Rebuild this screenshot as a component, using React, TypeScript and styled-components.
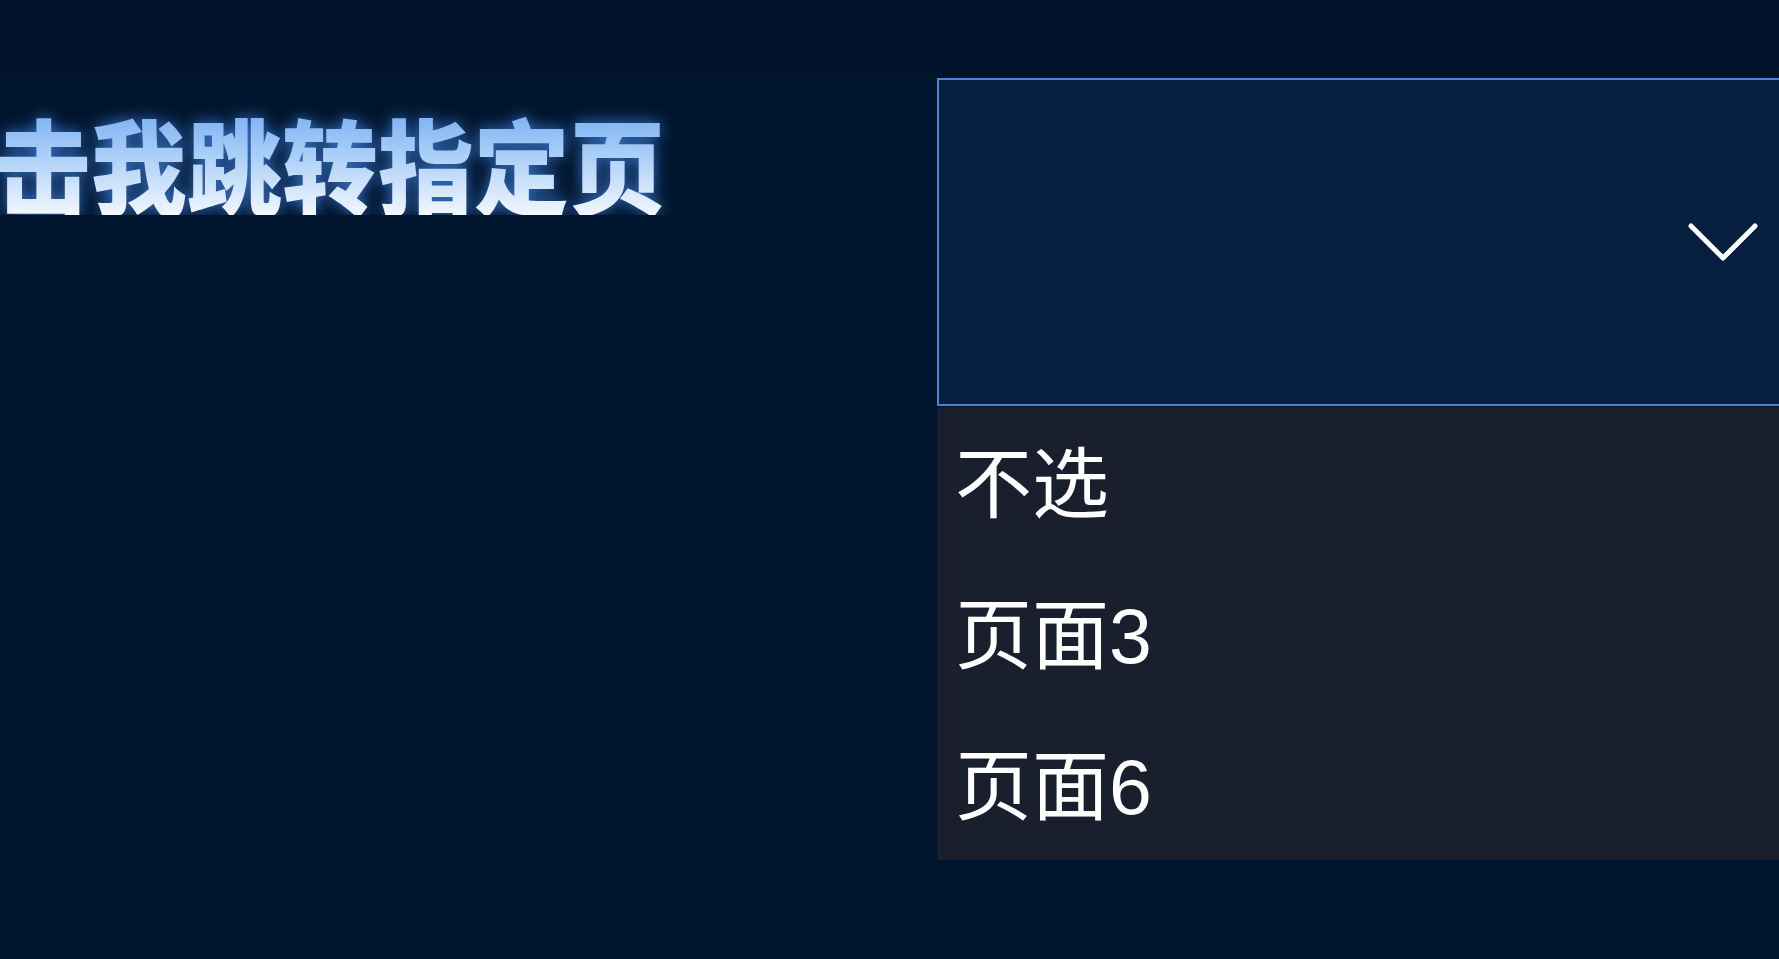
import React from "react";
import styled, { createGlobalStyle } from "styled-components";

const GlobalStyle = createGlobalStyle`
	html, body {
		margin: 0;
		padding: 0;
		height: 100%;
		overflow: hidden;
		background-color: #00152d;
	}
	#root {
		min-height: 100vh;
	}
`;

const options = ["不选", "页面3", "页面6"];

const App: React.FC = () => {
	return (
		<Page>
			<GlobalStyle />
			<TitleColumn>
				<Title>点击我跳转指定页</Title>
			</TitleColumn>
			<SelectColumn>
				<SelectBox>
					<Chevron viewBox="0 0 70 38">
						<polyline points="3,3 35,35 67,3" />
					</Chevron>
				</SelectBox>
				<Menu>
					{options.map(o => (
						<MenuItem key={o}>{o}</MenuItem>
					))}
				</Menu>
			</SelectColumn>
		</Page>
	);
};

export default App;

const Page = styled.main`
	min-height: 100vh;
	display: flex;
	align-items: flex-start;
	background: linear-gradient(180deg, #001129 0%, #00152d 12%, #00152d 100%);
	padding-top: 78px;
	box-sizing: border-box;
	font-family: "Liberation Sans", "Noto Sans CJK SC", sans-serif;
`;

const TitleColumn = styled.div`
	flex: none;
	width: 937px;
	display: flex;
	justify-content: flex-end;
	padding-right: 272px;
	padding-top: 33px;
	box-sizing: border-box;
	overflow: hidden;
`;

const Title = styled.h1`
	margin: 0;
	flex: none;
	white-space: nowrap;
	font-family: "Noto Sans CJK SC", sans-serif;
	font-size: 104px;
	font-weight: 800;
	line-height: 1;
	transform: scaleX(0.92);
	transform-origin: right center;
	background: linear-gradient(180deg, #7ab0f2 0%, #b4d4f8 50%, #f2f7ff 100%);
	-webkit-background-clip: text;
	background-clip: text;
	color: transparent;
	filter: drop-shadow(0 0 8px rgba(70, 140, 240, 0.8));
`;

const SelectColumn = styled.div`
	flex: none;
	width: 900px;
	display: flex;
	flex-direction: column;
`;

const SelectBox = styled.div`
	height: 328px;
	box-sizing: border-box;
	border: 2px solid #4585d2;
	background-color: #061f3f;
	display: flex;
	align-items: center;
	justify-content: flex-end;
	padding-right: 77px;
`;

const Chevron = styled.svg`
	width: 70px;
	height: 38px;
	fill: none;
	stroke: #ffffff;
	stroke-width: 5;
	stroke-linecap: round;
	stroke-linejoin: round;
`;

const Menu = styled.ul`
	list-style: none;
	margin: 1px 0 0;
	padding: 0;
	background-color: #1a1f2d;
	border-radius: 4px;
`;

const MenuItem = styled.li`
	height: 151px;
	box-sizing: border-box;
	display: flex;
	align-items: center;
	padding: 0 18px 9px;
	color: #ffffff;
	font-size: 77px;
	font-family: "Liberation Sans", "Noto Sans CJK SC", sans-serif;
`;
